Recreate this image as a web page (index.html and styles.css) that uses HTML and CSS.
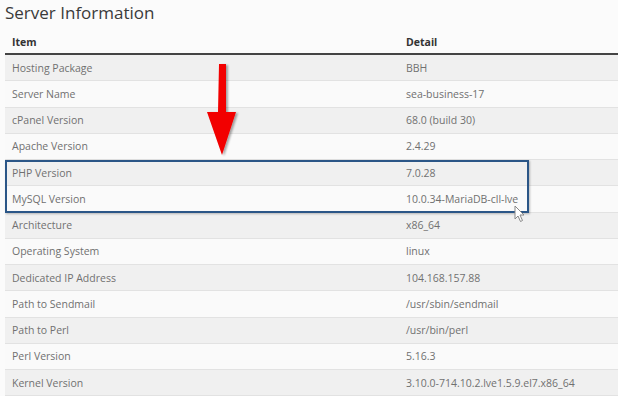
FILE: index.html
```html
<!DOCTYPE html>
<html>
<head>
<meta charset="utf-8">
<link rel="stylesheet" href="styles.css">
</head>
<body>
<div class="page">
  <h1 class="title">Server Information</h1>
  <table class="info">
    <thead>
      <tr><th class="c1">Item</th><th class="c2">Detail</th></tr>
    </thead>
    <tbody>
      <tr><td>Hosting Package</td><td>BBH</td></tr>
      <tr><td>Server Name</td><td>sea-business-17</td></tr>
      <tr><td>cPanel Version</td><td>68.0 (build 30)</td></tr>
      <tr><td>Apache Version</td><td>2.4.29</td></tr>
      <tr><td>PHP Version</td><td>7.0.28</td></tr>
      <tr><td>MySQL Version</td><td>10.0.34-MariaDB-cll-lve</td></tr>
      <tr><td>Architecture</td><td>x86_64</td></tr>
      <tr><td>Operating System</td><td>linux</td></tr>
      <tr><td>Dedicated IP Address</td><td>104.168.157.88</td></tr>
      <tr><td>Path to Sendmail</td><td>/usr/sbin/sendmail</td></tr>
      <tr><td>Path to Perl</td><td>/usr/bin/perl</td></tr>
      <tr><td>Perl Version</td><td>5.16.3</td></tr>
      <tr><td>Kernel Version</td><td>3.10.0-714.10.2.lve1.5.9.el7.x86_64</td></tr>
    </tbody>
  </table>

  <div class="highlight"></div>

  <svg class="arrow" width="40" height="100" viewBox="0 0 40 100">
    <defs>
      <filter id="sh" x="-50%" y="-20%" width="200%" height="140%">
        <feGaussianBlur in="SourceAlpha" stdDeviation="1.2"/>
        <feOffset dx="2" dy="1" result="o"/>
        <feComponentTransfer in="o" result="b"><feFuncA type="linear" slope="0.35"/></feComponentTransfer>
        <feMerge><feMergeNode in="b"/><feMergeNode in="SourceGraphic"/></feMerge>
      </filter>
    </defs>
    <path d="M13 2 L20 2 L20 50 L30 50 L16 93 L1 50 L12 50 Z" fill="#f20000" filter="url(#sh)"/>
  </svg>

  <svg class="cursor" width="12" height="18" viewBox="0 0 12 18">
    <path d="M1 1 L1 14 L4 11 L6.5 16.5 L8.5 15.5 L6 10 L10 10 Z" fill="#fff" stroke="#888" stroke-width="1" stroke-linejoin="round"/>
  </svg>
</div>
</body>
</html>
```

FILE: styles.css
```css
html, body {
  margin: 0;
  padding: 0;
  background: #fbfbfb;
}
body {
  font-family: "Open Sans", "Noto Sans", sans-serif;
  overflow: hidden;
}
.page {
  position: relative;
  padding-left: 5px;
  width: 640px;
}
.title {
  margin: 0 0 4px 0;
  font-size: 17px;
  line-height: 26px;
  font-weight: 400;
  color: #3a3a3a;
}
.info {
  border-collapse: collapse;
  width: 640px;
  font-size: 10.5px;
}
.info th {
  text-align: left;
  font-weight: 700;
  color: #333;
  height: 23px;
  padding: 0 7px;
  border-bottom: 2px solid #444;
  vertical-align: middle;
}
.info th.c1 { width: 380px; }
.info td {
  height: 25.25px;
  padding: 0 7px;
  color: #707070;
  border-bottom: 1px solid #e2e2e2;
  vertical-align: middle;
}
.info tbody tr:nth-child(odd) { background: #f0f0f0; }
.info tbody tr:nth-child(even) { background: #fafafa; }

.highlight {
  position: absolute;
  left: 5px;
  top: 160px;
  width: 520px;
  height: 49px;
  border: 2px solid #2b5687;
  box-shadow: 1px 1px 2px rgba(0,0,0,0.25);
}
.arrow {
  position: absolute;
  left: 206px;
  top: 62px;
}
.cursor {
  position: absolute;
  left: 514px;
  top: 205px;
}
```
